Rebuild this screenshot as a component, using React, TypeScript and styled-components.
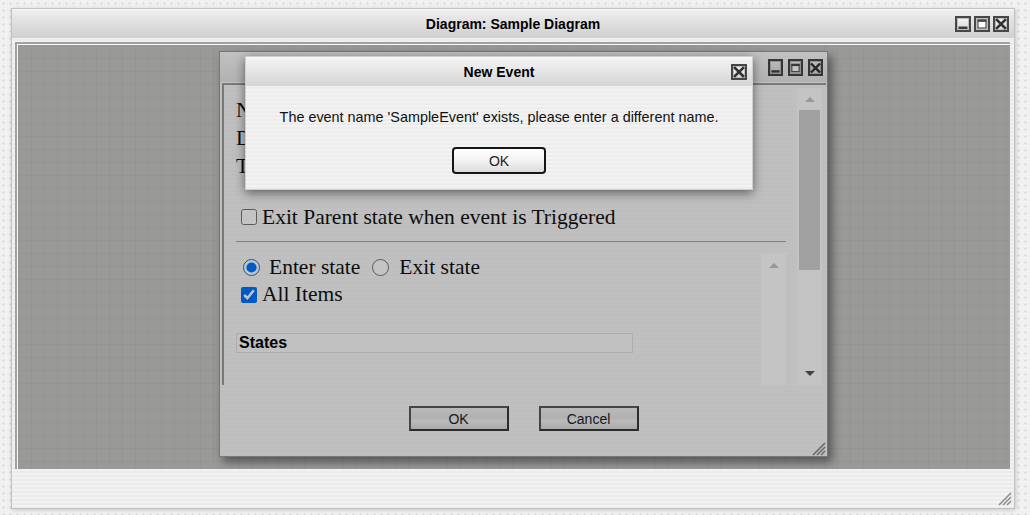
import React from 'react';
import styled, { createGlobalStyle } from 'styled-components';

const GlobalStyle = createGlobalStyle`
  html, body { margin: 0; padding: 0; }
  body {
    width: 1030px;
    height: 515px;
    overflow: hidden;
    background-color: #f1f1f1;
    background-image: radial-gradient(circle, #d9d9d9 0.9px, transparent 1.3px);
    background-size: 7px 7px;
    font-family: "Liberation Sans", Arial, sans-serif;
  }
`;

const stripes = `repeating-linear-gradient(to bottom, rgba(255,255,255,0.35) 0px, rgba(255,255,255,0.35) 2px, rgba(0,0,0,0) 2px, rgba(0,0,0,0) 4px)`;

const Page = styled.div`
  padding: 8px 0 0 11px;
`;

const Window = styled.div`
  width: 1004px;
  height: 501px;
  box-sizing: border-box;
  border: 1px solid #c2c2c2;
  background-color: #ebebeb;
  background-image: ${stripes};
  display: flex;
  flex-direction: column;
  box-shadow: 1px 1px 4px rgba(0, 0, 0, 0.18);
`;

const TitleBar = styled.div<{ $h: number; $top: string; $bottom: string }>`
  position: relative;
  height: ${(p) => p.$h}px;
  flex: 0 0 auto;
  display: flex;
  align-items: center;
  justify-content: flex-end;
  background: linear-gradient(to bottom, ${(p) => p.$top}, ${(p) => p.$bottom});
  border-top: 1px solid rgba(255, 255, 255, 0.8);
  box-sizing: border-box;
`;

const TitleText = styled.div`
  position: absolute;
  left: 0;
  right: 0;
  text-align: center;
  font: bold 14px "Liberation Sans", Arial, sans-serif;
  color: #000;
  pointer-events: none;
`;

const Controls = styled.div<{ $gap: number; $pad: number }>`
  display: flex;
  gap: ${(p) => p.$gap}px;
  padding-right: ${(p) => p.$pad}px;
`;

const CtrlButton = styled.div<{ $w: number; $h: number }>`
  width: ${(p) => p.$w}px;
  height: ${(p) => p.$h}px;
  box-sizing: border-box;
  border: 2px solid #474747;
  background: linear-gradient(to bottom, #f6f6f6, #d6d6d6);
  box-shadow: inset 0 0 0 1px #bdbdbd;
  display: flex;
  align-items: center;
  justify-content: center;
  svg { display: block; }
`;

type IconKind = 'min' | 'max' | 'close';

const CtrlIcon: React.FC<{ kind: IconKind }> = ({ kind }) => (
  <svg width="12" height="12" viewBox="0 0 12 12">
    {kind === 'min' && <rect x="1.5" y="8.5" width="9" height="2.5" fill="#3c3c3c" />}
    {kind === 'max' && (
      <g>
        <rect x="2" y="2" width="8" height="8" fill="#fff" stroke="#4a4a4a" strokeWidth="1.2" />
        <rect x="1.5" y="1.5" width="9" height="2.4" fill="#4a4a4a" />
      </g>
    )}
    {kind === 'close' && (
      <path d="M2 2 L10 10 M10 2 L2 10" stroke="#333" strokeWidth="2.6" strokeLinecap="square" />
    )}
  </svg>
);

const WindowControls: React.FC<{ w: number; h: number; gap: number; pad: number; kinds: IconKind[] }> = ({
  w,
  h,
  gap,
  pad,
  kinds,
}) => (
  <Controls $gap={gap} $pad={pad}>
    {kinds.map((k) => (
      <CtrlButton key={k} $w={w} $h={h}>
        <CtrlIcon kind={k} />
      </CtrlButton>
    ))}
  </Controls>
);

const Body = styled.div`
  flex: 1;
  display: flex;
  padding: 4px 4px 0 3px;
  min-height: 0;
`;

const CanvasFrame = styled.div`
  flex: 1;
  display: flex;
  border-top: 2px solid #a0a0a0;
  border-left: 2px solid #a0a0a0;
  padding: 1px 0 0 1px;
  background: #fafafa;
`;

const Canvas = styled.div`
  position: relative;
  flex: 1;
  overflow: hidden;
  background-color: #c8c8c6;
  background-image: linear-gradient(to right, rgba(130, 140, 110, 0.09) 1px, transparent 1px),
    linear-gradient(to bottom, rgba(130, 140, 110, 0.09) 1px, transparent 1px);
  background-size: 13px 13px;
`;

const Overlay = styled.div`
  position: absolute;
  inset: 0;
  background: rgba(0, 0, 0, 0.23);
  z-index: 5;
`;

const Footer = styled.div`
  position: relative;
  height: 39px;
  flex: 0 0 auto;
`;

const Grip = styled.div<{ $right: number; $bottom: number }>`
  position: absolute;
  right: ${(p) => p.$right}px;
  bottom: ${(p) => p.$bottom}px;
  width: 16px;
  height: 16px;
  svg { display: block; }
`;

const GripIcon: React.FC<{ color: string }> = ({ color }) => (
  <svg width="16" height="16" viewBox="0 0 16 16">
    <path d="M15 3 L3 15 M15 7 L7 15 M15 11 L11 15" stroke={color} strokeWidth="1.6" />
  </svg>
);

/* Inner editor window */

const InnerWindow = styled.div`
  position: absolute;
  left: 201px;
  top: 6px;
  width: 609px;
  height: 406px;
  box-sizing: border-box;
  border: 1px solid #9c9c9c;
  background-color: #f7f7f7;
  background-image: ${stripes};
  display: flex;
  flex-direction: column;
  box-shadow: 4px 5px 9px rgba(0, 0, 0, 0.45);
`;

const InnerTitleSep = styled.div`
  height: 1px;
  background: #ffffff;
  margin: 0 2px;
`;

const ContentFrame = styled.div`
  height: 302px;
  box-sizing: border-box;
  margin: 0 1px 0 2px;
  border-top: 2px solid #9e9e9e;
  border-left: 2px solid #9e9e9e;
  display: flex;
  gap: 11px;
  padding: 3px 4px 0 12px;
  overflow: hidden;
`;

const MainColumn = styled.div`
  width: 550px;
  display: flex;
  flex-direction: column;
`;

const Fields = styled.div`
  margin-top: 8px;
  padding-left: 0;
  font: 21.5px/28px "Liberation Serif", "Times New Roman", serif;
  color: #111;
`;

const OptionLabel = styled.label<{ $indent: number; $gap: number }>`
  display: flex;
  align-items: center;
  gap: ${(p) => p.$gap}px;
  padding-left: ${(p) => p.$indent}px;
  height: 27px;
  font: 21.5px "Liberation Serif", "Times New Roman", serif;
  color: #111;
  white-space: nowrap;
`;

const CheckRow = styled(OptionLabel)`
  margin-top: 23px;
  height: 28px;
`;

const Check = styled.input.attrs({ type: 'checkbox' })`
  width: 16px;
  height: 16px;
  margin: 0;
`;

const Radio = styled.input.attrs({ type: 'radio' })`
  width: 17px;
  height: 17px;
  margin: 0;
`;

const Rule = styled.div`
  margin-top: 10px;
  height: 1px;
  background: #a9a9a9;
`;

const LowerSection = styled.div`
  margin-top: 12px;
  height: 131px;
  display: flex;
`;

const LowerContent = styled.div`
  flex: 1;
  display: flex;
  flex-direction: column;
`;

const RadioRow = styled.div`
  display: flex;
  gap: 12px;
`;

const StatesHeader = styled.div`
  margin-top: 25px;
  width: 397px;
  height: 20px;
  box-sizing: border-box;
  border: 1px solid #e2e2e2;
  background: #fcfcfc;
  padding-left: 2px;
  font: bold 16px/18px "Liberation Sans", Arial, sans-serif;
  color: #000;
`;

const ScrollTrack = styled.div<{ $w: number }>`
  width: ${(p) => p.$w}px;
  flex: 0 0 auto;
  background: #ffffff;
  display: flex;
  flex-direction: column;
  align-items: center;
  padding-top: 9px;
  box-sizing: border-box;
`;

const OuterScroll = styled(ScrollTrack)`
  height: 297px;
`;

const Arrow = styled.div<{ $dir: 'up' | 'down'; $color: string }>`
  width: 0;
  height: 0;
  border-left: 5px solid transparent;
  border-right: 5px solid transparent;
  ${(p) =>
    p.$dir === 'up'
      ? `border-bottom: 5px solid ${p.$color};`
      : `border-top: 5px solid ${p.$color};`}
`;

const Thumb = styled.div`
  width: 21px;
  height: 160px;
  margin-top: 8px;
  background: #d2d2d2;
`;

const TrackFill = styled.div`
  flex: 1;
`;

const DownSlot = styled.div`
  height: 14px;
  display: flex;
  align-items: flex-start;
`;

const ButtonRow = styled.div`
  position: relative;
  flex: 1;
  display: flex;
  justify-content: center;
  gap: 30px;
  padding-top: 21px;
`;

const FormButton = styled.button`
  width: 100px;
  height: 25px;
  box-sizing: border-box;
  border: 2px solid #3a3a3a;
  border-top-color: #5a5a5a;
  border-left-color: #5a5a5a;
  background: linear-gradient(to bottom, #f2f2f2 0%, #e6e6e6 45%, #f4f4f4 60%, #dcdcdc 100%);
  font: 14px "Liberation Sans", Arial, sans-serif;
  color: #222;
  padding: 0;
  cursor: pointer;
`;

/* Message dialog */

const Dialog = styled.div`
  position: absolute;
  left: 227px;
  top: 11px;
  width: 508px;
  height: 134px;
  box-sizing: border-box;
  border: 1px solid #cfcfcf;
  background-color: #ececec;
  background-image: ${stripes};
  z-index: 10;
  display: flex;
  flex-direction: column;
  box-shadow: 0 3px 10px rgba(0, 0, 0, 0.5);
`;

const DialogBody = styled.div`
  flex: 1;
  display: flex;
  flex-direction: column;
  align-items: center;
  padding-top: 23px;
`;

const Message = styled.div`
  font: 14.4px/16px "Liberation Sans", Arial, sans-serif;
  color: #111;
`;

const DialogButton = styled.button`
  margin-top: 22px;
  width: 94px;
  height: 27px;
  box-sizing: border-box;
  border: 2px solid #161616;
  border-radius: 4px;
  background: linear-gradient(to bottom, #ffffff 0%, #f3f3f3 50%, #dcdcdc 100%);
  font: 14px "Liberation Sans", Arial, sans-serif;
  color: #222;
  padding: 0;
`;

export default function App() {
  return (
    <>
      <GlobalStyle />
      <Page>
        <Window>
          <TitleBar $h={29} $top="#eeeeee" $bottom="#cfcfcf">
            <TitleText>Diagram: Sample Diagram</TitleText>
            <WindowControls w={16} h={16} gap={3} pad={5} kinds={['min', 'max', 'close']} />
          </TitleBar>
          <Body>
            <CanvasFrame>
              <Canvas>
                <InnerWindow>
                  <TitleBar $h={30} $top="#fbfbfb" $bottom="#e8e8e8">
                    <WindowControls w={15} h={17} gap={5} pad={4} kinds={['min', 'max', 'close']} />
                  </TitleBar>
                  <InnerTitleSep />
                  <ContentFrame>
                    <MainColumn>
                      <Fields>
                        <div>Name:</div>
                        <div>Description:</div>
                        <div>Trigger:</div>
                      </Fields>
                      <CheckRow $indent={5} $gap={5}>
                        <Check />
                        Exit Parent state when event is Triggered
                      </CheckRow>
                      <Rule />
                      <LowerSection>
                        <LowerContent>
                          <RadioRow>
                            <OptionLabel $indent={7} $gap={9}>
                              <Radio name="st" defaultChecked />
                              Enter state
                            </OptionLabel>
                            <OptionLabel $indent={0} $gap={10}>
                              <Radio name="st" />
                              Exit state
                            </OptionLabel>
                          </RadioRow>
                          <OptionLabel $indent={5} $gap={5}>
                            <Check defaultChecked />
                            All Items
                          </OptionLabel>
                          <StatesHeader>States</StatesHeader>
                        </LowerContent>
                        <ScrollTrack $w={25}>
                          <Arrow $dir="up" $color="#c6c6c6" />
                        </ScrollTrack>
                      </LowerSection>
                    </MainColumn>
                    <OuterScroll $w={25}>
                      <Arrow $dir="up" $color="#c6c6c6" />
                      <Thumb />
                      <TrackFill />
                      <DownSlot>
                        <Arrow $dir="down" $color="#555555" />
                      </DownSlot>
                    </OuterScroll>
                  </ContentFrame>
                  <ButtonRow>
                    <FormButton>OK</FormButton>
                    <FormButton>Cancel</FormButton>
                    <Grip $right={1} $bottom={0}>
                      <GripIcon color="#8a8a8a" />
                    </Grip>
                  </ButtonRow>
                </InnerWindow>
                <Overlay />
                <Dialog>
                  <TitleBar $h={29} $top="#f4f4f4" $bottom="#d4d4d4">
                    <TitleText>New Event</TitleText>
                    <WindowControls w={16} h={16} gap={0} pad={5} kinds={['close']} />
                  </TitleBar>
                  <DialogBody>
                    <Message>The event name 'SampleEvent' exists, please enter a different name.</Message>
                    <DialogButton>OK</DialogButton>
                  </DialogBody>
                </Dialog>
              </Canvas>
            </CanvasFrame>
          </Body>
          <Footer>
            <Grip $right={2} $bottom={2}>
              <GripIcon color="#8e8e8e" />
            </Grip>
          </Footer>
        </Window>
      </Page>
    </>
  );
}
